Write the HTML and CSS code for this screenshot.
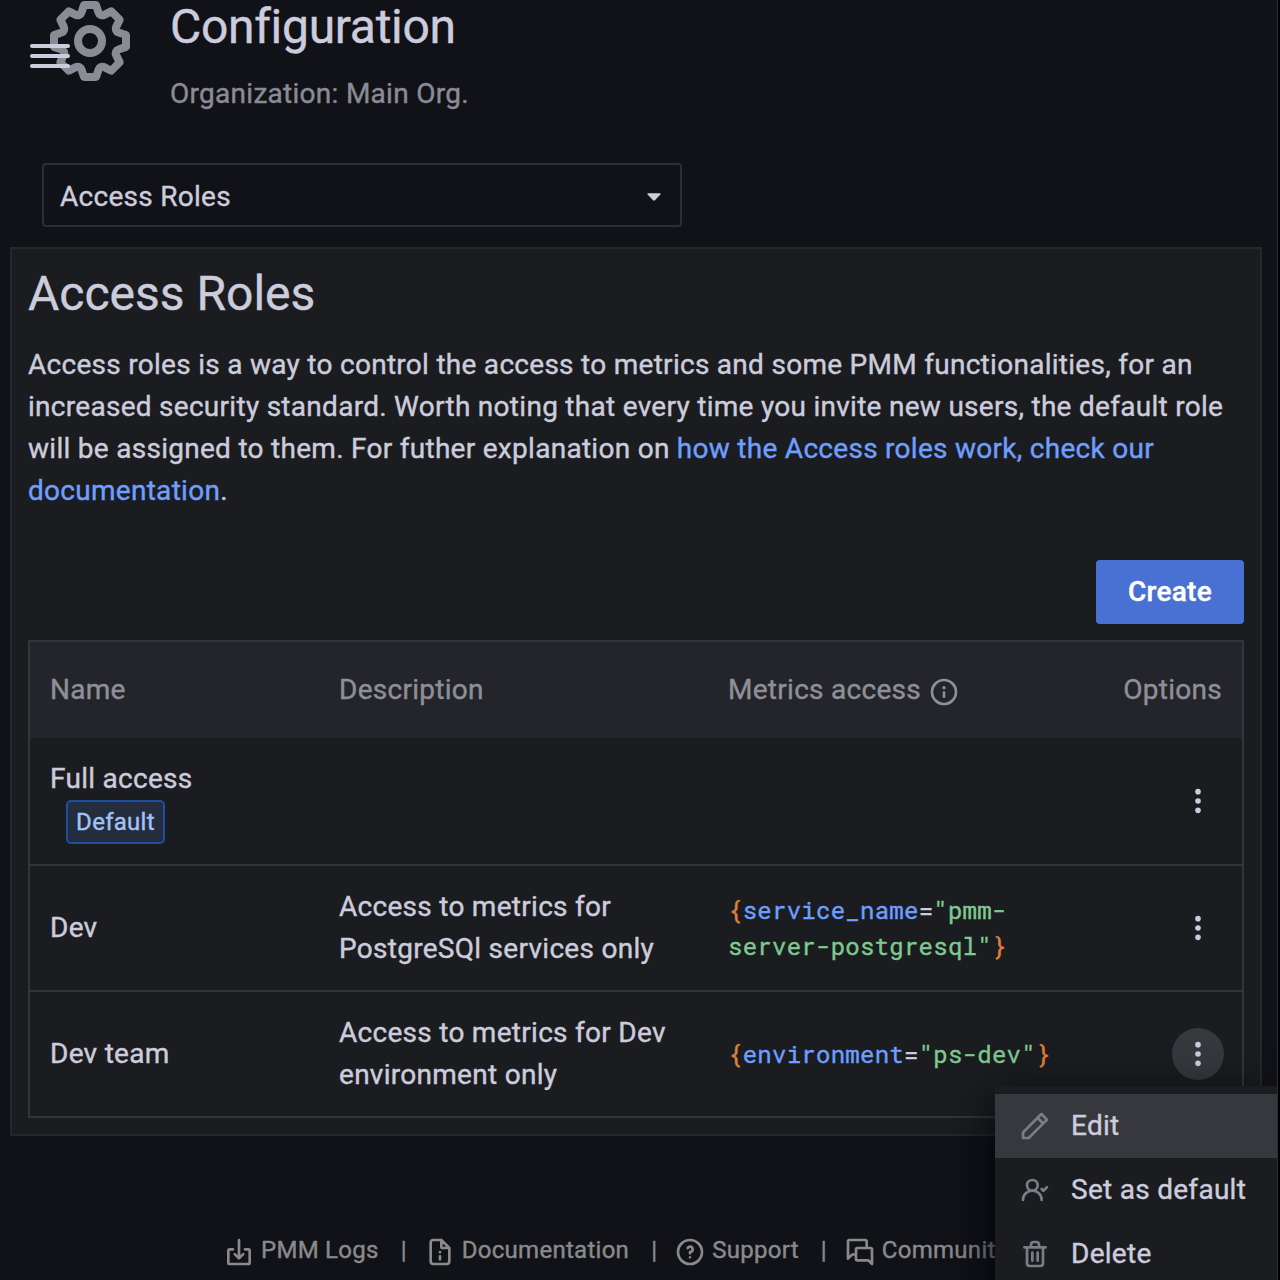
FILE: index.html
```html
<!DOCTYPE html>
<html lang="en">
<head>
<meta charset="utf-8">
<title>Configuration: Access Roles</title>
<link rel="stylesheet" href="styles.css">
</head>
<body>
<div class="page">
  <button class="menu-toggle" aria-label="Toggle menu"><span></span><span></span><span></span></button>
  <header class="page-header">
    <svg class="cog" viewBox="0 0 24 24"><path d="M21.32,9.55l-1.89-.63.89-1.78A1,1,0,0,0,20.13,6L18,3.87a1,1,0,0,0-1.15-.19l-1.78.89-.63-1.89A1,1,0,0,0,13.5,2h-3a1,1,0,0,0-.95.68L8.92,4.57,7.14,3.68A1,1,0,0,0,6,3.87L3.87,6a1,1,0,0,0-.19,1.15l.89,1.78-1.89.63A1,1,0,0,0,2,10.5v3a1,1,0,0,0,.68.95l1.89.63-.89,1.78A1,1,0,0,0,3.87,18L6,20.13a1,1,0,0,0,1.15.19l1.78-.89.63,1.89a1,1,0,0,0,.95.68h3a1,1,0,0,0,.95-.68l.63-1.89,1.78.89A1,1,0,0,0,18,20.13L20.13,18a1,1,0,0,0,.19-1.15l-.89-1.78,1.89-.63A1,1,0,0,0,22,13.5v-3A1,1,0,0,0,21.32,9.55ZM20,12.78l-1.2.4A2,2,0,0,0,17.64,16l.57,1.14-1.1,1.1L16,17.64a2,2,0,0,0-2.79,1.16l-.4,1.2H11.22l-.4-1.2A2,2,0,0,0,8,17.64l-1.14.57-1.1-1.1L6.36,16A2,2,0,0,0,5.2,13.18L4,12.78V11.22l1.2-.4A2,2,0,0,0,6.36,8L5.79,6.89l1.1-1.1L8,6.36A2,2,0,0,0,10.82,5.2l.4-1.2h1.56l.4,1.2A2,2,0,0,0,16,6.36l1.14-.57,1.1,1.1L17.64,8a2,2,0,0,0,1.16,2.79l1.2.4ZM12,8a4,4,0,1,0,4,4A4,4,0,0,0,12,8Zm0,6a2,2,0,1,1,2-2A2,2,0,0,1,12,14Z"/></svg>
    <div class="titles">
      <h1>Configuration</h1>
      <div class="subtitle">Organization: Main Org.</div>
    </div>
  </header>

  <div class="select"><span>Access Roles</span><svg class="caret" viewBox="0 0 14 8"><path d="M1 .3h12q1 .2.4 1.1L8 7.3q-1 .9-2 0L.6 1.4Q0 .5 1 .3z"/></svg></div>

  <main class="panel">
    <h2>Access Roles</h2>
    <p>Access roles is a way to control the access to metrics and some PMM functionalities, for an increased security standard. Worth noting that every time you invite new users, the default role will be assigned to them. For futher explanation on <a>how the Access roles work, check our documentation</a>.</p>
    <div class="actions"><button class="create">Create</button></div>
    <table class="roles">
      <thead>
        <tr>
          <th class="col-name">Name</th>
          <th class="col-desc">Description</th>
          <th><span class="with-icon">Metrics access <svg class="icon" viewBox="0 0 24 24"><path d="M12,2A10,10,0,1,0,22,12,10,10,0,0,0,12,2Zm0,18a8,8,0,1,1,8-8A8,8,0,0,1,12,20Zm0-8.5a1,1,0,0,0-1,1v3a1,1,0,0,0,2,0v-3A1,1,0,0,0,12,11.5Zm0-4a1.25,1.25,0,1,0,1.25,1.25A1.25,1.25,0,0,0,12,7.5Z"/></svg></span></th>
          <th class="col-options">Options</th>
        </tr>
      </thead>
      <tbody>
        <tr>
          <td class="role-name">Full access<div><span class="badge">Default</span></div></td>
          <td></td>
          <td></td>
          <td class="options"><button class="more"><svg class="icon" viewBox="0 0 24 24"><circle cx="12" cy="5" r="2.1"/><circle cx="12" cy="12" r="2.1"/><circle cx="12" cy="19" r="2.1"/></svg></button></td>
        </tr>
        <tr>
          <td>Dev</td>
          <td>Access to metrics for PostgreSQl services only</td>
          <td><code><span class="brace">{</span><span class="label">service_name</span>=<span class="value">"pmm-<br>server-postgresql"</span><span class="brace">}</span></code></td>
          <td class="options"><button class="more"><svg class="icon" viewBox="0 0 24 24"><circle cx="12" cy="5" r="2.1"/><circle cx="12" cy="12" r="2.1"/><circle cx="12" cy="19" r="2.1"/></svg></button></td>
        </tr>
        <tr>
          <td>Dev team</td>
          <td>Access to metrics for Dev environment only</td>
          <td><code><span class="brace">{</span><span class="label">environment</span>=<span class="value">"ps-dev"</span><span class="brace">}</span></code></td>
          <td class="options"><button class="more active"><svg class="icon" viewBox="0 0 24 24"><circle cx="12" cy="5" r="2.1"/><circle cx="12" cy="12" r="2.1"/><circle cx="12" cy="19" r="2.1"/></svg></button></td>
        </tr>
      </tbody>
    </table>
  </main>

  <footer class="footer">
    <a class="logs"><svg class="icon line" viewBox="0 0 24 24"><path d="M12 3v13.5M8.8 13.6l3.2 3.2 3.2-3.2M7.5 10H5a1 1 0 0 0-1 1v9a1 1 0 0 0 1 1h14a1 1 0 0 0 1-1v-9a1 1 0 0 0-1-1h-2.500"/></svg>PMM Logs</a>
    <i>|</i>
    <a class="docs"><svg class="icon line" viewBox="0 0 24 24"><path d="M13 3H7a2 2 0 0 0-2 2v14a2 2 0 0 0 2 2h10a2 2 0 0 0 2-2V9l-6-6v5a1 1 0 0 0 1 1h5M12 15.200v2.300M12 12v.1"/></svg>Documentation</a>
    <i>|</i>
    <a class="support"><svg class="icon" viewBox="0 0 24 24"><path d="M11.29,15.29a1.58,1.58,0,0,0-.12.15.76.76,0,0,0-.09.18.64.64,0,0,0-.06.18,1.36,1.36,0,0,0,0,.2.84.84,0,0,0,.08.38.9.9,0,0,0,.54.54.94.94,0,0,0,.76,0,.9.9,0,0,0,.54-.54A1,1,0,0,0,13,16a1,1,0,0,0-.29-.71A1,1,0,0,0,11.29,15.29ZM12,2A10,10,0,1,0,22,12,10,10,0,0,0,12,2Zm0,18a8,8,0,1,1,8-8A8,8,0,0,1,12,20ZM12,7A3,3,0,0,0,9.400,8.500a1,1,0,1,0,1.730,1A1,1,0,0,1,12,9a1,1,0,0,1,0,2,1,1,0,0,0-1,1v1a1,1,0,0,0,2,0v-.180A3,3,0,0,0,12,7Z"/></svg>Support</a>
    <i>|</i>
    <a class="community"><svg class="icon" viewBox="0 0 24 24"><path d="M20,8H18V4a2,2,0,0,0-2-2H4A2,2,0,0,0,2,4V17a1,1,0,0,0,.62.920A.84.84,0,0,0,3,18a1,1,0,0,0,.71-.29l2.810-2.820H8v2.440a2,2,0,0,0,2,2h7.920l2.370,2.380A1,1,0,0,0,21,22a.84.84,0,0,0,.38-.08A1,1,0,0,0,22,21V10A2,2,0,0,0,20,8ZM8,10v2.890H6.110a1,1,0,0,0-.71.29L4,14.590V4H16V8H10A2,2,0,0,0,8,10Zm12,8.590-1-1a1,1,0,0,0-.71-.3H10V10H20Z"/></svg>Community</a>
  </footer>

  <div class="dropdown">
    <div class="item hover"><svg class="icon" viewBox="0 0 24 24"><path d="M22,7.24a1,1,0,0,0-.29-.71L17.470,2.290A1,1,0,0,0,16.760,2a1,1,0,0,0-.71.29L13.220,5.120h0L2.290,16.050a1,1,0,0,0-.29.71V21a1,1,0,0,0,1,1H7.240A1,1,0,0,0,8,21.710L18.870,10.780h0L21.710,8a1.190,1.190,0,0,0,.22-.33,1,1,0,0,0,0-.24.7.7,0,0,0,0-.14ZM6.830,20H4V17.170l9.930-9.930,2.830,2.830ZM18.170,8.660,15.340,5.830l1.420-1.410,2.820,2.820Z"/></svg>Edit</div>
    <div class="item"><svg class="icon" viewBox="0 0 24 24"><path d="M13.3,12.220A4.920,4.920,0,0,0,15,8.500a5,5,0,0,0-10,0,4.920,4.920,0,0,0,1.700,3.720A8,8,0,0,0,2,19.500a1,1,0,0,0,2,0,6,6,0,0,1,12,0,1,1,0,0,0,2,0A8,8,0,0,0,13.300,12.220ZM10,11.500a3,3,0,1,1,3-3A3,3,0,0,1,10,11.500ZM21.710,9.130a1,1,0,0,0-1.420,0l-2,2-.62-.63a1,1,0,0,0-1.420,0,1,1,0,0,0,0,1.410l1.340,1.340a1,1,0,0,0,1.410,0l2.670-2.670A1,1,0,0,0,21.710,9.130Z"/></svg>Set as default</div>
    <div class="item"><svg class="icon" viewBox="0 0 24 24"><path d="M10,18a1,1,0,0,0,1-1V11a1,1,0,0,0-2,0v6A1,1,0,0,0,10,18ZM20,6H16V5a3,3,0,0,0-3-3H11A3,3,0,0,0,8,5V6H4A1,1,0,0,0,4,8H5V19a3,3,0,0,0,3,3h8a3,3,0,0,0,3-3V8h1a1,1,0,0,0,0-2ZM10,5a1,1,0,0,1,1-1h2a1,1,0,0,1,1,1V6H10Zm7,14a1,1,0,0,1-1,1H8a1,1,0,0,1-1-1V8H17Zm-3-1a1,1,0,0,0,1-1V11a1,1,0,0,0-2,0v6A1,1,0,0,0,14,18Z"/></svg>Delete</div>
  </div>
</div>
</body>
</html>
```

FILE: styles.css
```css
* { box-sizing: border-box; }
html { background: #000; }
body {
  margin: 0;
  height: 1280px;
  overflow: hidden;
  font: 28px/42px Roboto, "Liberation Sans", sans-serif;
  letter-spacing: 0.28px;
  -webkit-text-stroke: 0.4px currentColor;
  color: #ccccdc;
}
.page {
  position: relative;
  width: 1278px;
  height: 1280px;
  overflow: hidden;
  background: #111217;
  border-right: 1px solid #2c2d32;
}
button { border: 0; padding: 0; font: inherit; letter-spacing: inherit; color: inherit; background: none; }
h1, h2 { margin: 0; font-size: 48px; font-weight: 400; letter-spacing: 0; line-height: 56px; }
.icon { width: 32px; height: 32px; fill: currentColor; flex: none; display: block; }
.icon.line { fill: none; stroke: currentColor; stroke-width: 2; stroke-linecap: round; stroke-linejoin: round; }

.menu-toggle {
  position: absolute;
  left: 30px;
  top: 44px;
  width: 40px;
  display: flex;
  flex-direction: column;
  gap: 6px;
}
.menu-toggle span { display: block; width: 40px; height: 4px; border-radius: 2px; background: #ccccdc; }

.page-header { display: flex; height: 163px; padding-left: 42px; }
.cog { width: 96px; height: 96px; margin: -7px 32px 0 0; fill: #8b8b96; flex: none; }
.titles h1 { line-height: 54px; letter-spacing: -0.3px; }
.subtitle { margin-top: 19px; color: #8b8b96; }

.select {
  display: flex;
  align-items: center;
  justify-content: space-between;
  width: 640px;
  height: 64px;
  margin-left: 42px;
  padding: 4px 19px 0 16px;
  border: 2px solid #2d2e33;
  border-radius: 4px;
}
.caret { width: 14px; height: 8px; fill: #ccccdc; }

.panel {
  width: 1252px;
  height: 889px;
  margin: 20px 0 0 10px;
  padding: 17px 16px 16px;
  background: #1b1c20;
  border: 2px solid #26272b;
}
.panel p { margin: 22px 0 0; }
.panel p a { color: #6e9fff; }
.actions { display: flex; justify-content: flex-end; margin: 48px 0 16px; }
.create {
  width: 148px;
  height: 64px;
  border-radius: 4px;
  background: #4871d3;
  color: #fff;
  font-weight: 500;
}

.roles {
  width: 1216px;
  table-layout: fixed;
  border: 2px solid #34353a;
  border-spacing: 0;
}
.roles th, .roles td { padding: 0 20px; text-align: left; font-weight: 400; }
.roles th { height: 96px; background: #24252a; color: #8f8f9a; }
.roles td { height: 126px; }
.roles tr + tr td { border-top: 2px solid #34353a; }
.roles .col-name { width: 289px; }
.roles .col-desc { width: 389px; }
.roles .col-options { width: 140px; text-align: right; white-space: nowrap; }
.with-icon { display: flex; align-items: center; gap: 7px; }
.with-icon .icon { margin-top: 4px; }
.badge {
  display: block;
  width: 99px;
  height: 44px;
  margin-left: 16px;
  border: 2px solid #1f4da0;
  border-radius: 5px;
  background: #242d3d;
  color: #a3c3f5;
  font-size: 24px;
  line-height: 41px;
  text-align: center;
}
.roles td.options { padding: 0 18px 0 0; }
.more { display: flex; align-items: center; justify-content: center; width: 52px; height: 52px; margin-left: auto; border-radius: 50%; }
.more.active { background: #37383d; }
code { display: block; font: 24px/36px "Roboto Mono", "Liberation Mono", monospace; letter-spacing: 0.26px; white-space: nowrap; }
.brace { color: #e0813a; }
.label { color: #6e9fff; }
.value { color: #7ec98f; }

.footer {
  display: flex;
  align-items: center;
  width: 1100px;
  margin: 94px 0 0 223px;
  font-size: 24px;
  line-height: 40px;
  white-space: nowrap;
  color: #8a8a8b;
}
.footer a { display: flex; align-items: center; gap: 6px; }
.footer .icon { margin-top: 4px; }
.footer i { width: 6px; margin: 0 17px 0 22px; font-style: normal; }

.dropdown {
  position: absolute;
  left: 995px;
  top: 1086px;
  width: 283px;
  height: 220px;
  padding-top: 8px;
  border-radius: 4px;
  background: #1b1c20;
  box-shadow: 0 16px 48px #010409;
}
.item { display: flex; align-items: center; gap: 20px; height: 64px; padding-left: 24px; }
.item .icon { color: #7c7c87; }
.item.hover { background: #37383d; }
```
